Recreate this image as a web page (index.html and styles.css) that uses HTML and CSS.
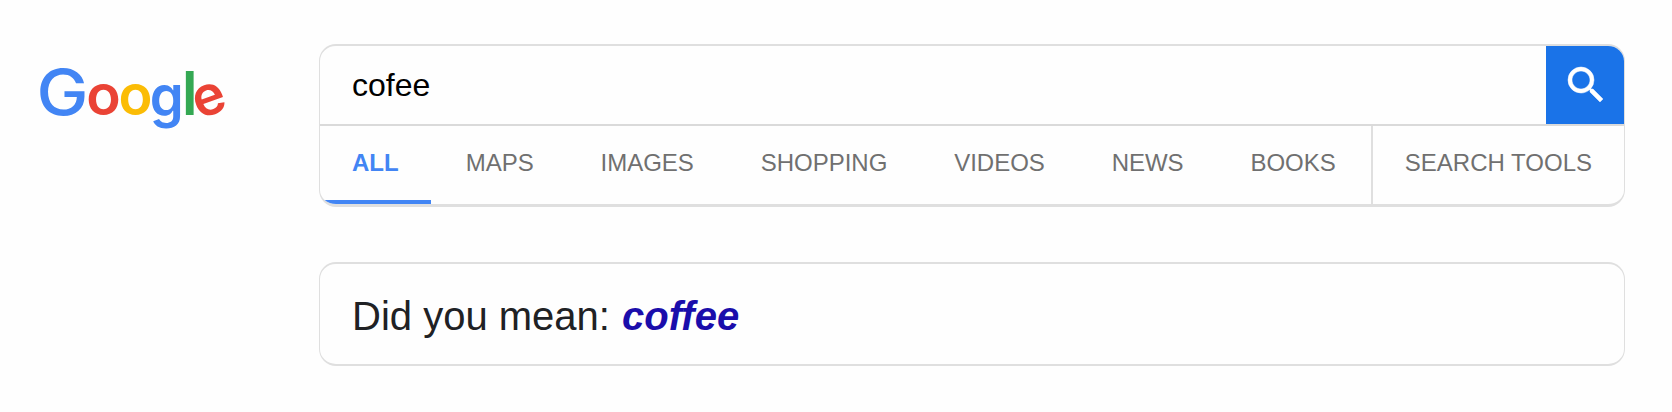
FILE: index.html
```html
<!DOCTYPE html>
<html lang="en">
<head>
<meta charset="utf-8">
<title>cofee - Google Search</title>
<link rel="stylesheet" href="styles.css">
</head>
<body>
<div class="page">
  <a class="logo" aria-label="Google">
    <svg width="200" height="80" viewBox="0 0 200 80">
      <g class="logo-text">
        <text class="blue cap" x="-3.500" y="63.500" textLength="52" lengthAdjust="spacingAndGlyphs">G</text>
        <text class="red round" x="46.300" y="63.500" textLength="34.500" lengthAdjust="spacingAndGlyphs">o</text>
        <text class="yellow round" x="78.500" y="63.500" textLength="34" lengthAdjust="spacingAndGlyphs">o</text>
        <text class="blue tail" x="109.800" y="64.500" textLength="34" lengthAdjust="spacingAndGlyphs">g</text>
        <text class="green ascender" x="141.700" y="63.500">l</text>
        <text class="red" x="152.800" y="63.500" transform="rotate(-20 169.800 48)">e</text>
      </g>
    </svg>
  </a>
  <main class="content">
    <section class="search card">
      <form class="search-row">
        <span class="query">cofee</span>
        <button class="search-button" type="button" aria-label="Search">
          <svg width="48" height="48" viewBox="0 0 24 24" fill="#fff" stroke="#fff" stroke-width=".25"><path d="M15.5 14h-.79l-.28-.27A6.47 6.47 0 0 0 16 9.500 6.500 6.500 0 1 0 9.500 16c1.610 0 3.090-.59 4.230-1.570l.27.28v.79l5 4.990L20.490 19l-4.990-5zm-6 0C7.010 14 5 11.990 5 9.500S7.010 5 9.500 5 14 7.010 14 9.500 11.990 14 9.500 14z"/></svg>
        </button>
      </form>
      <nav class="tabs">
        <a class="tab active">ALL</a>
        <a class="tab">MAPS</a>
        <a class="tab">IMAGES</a>
        <a class="tab">SHOPPING</a>
        <a class="tab">VIDEOS</a>
        <a class="tab">NEWS</a>
        <a class="tab">BOOKS</a>
        <a class="tools">SEARCH TOOLS</a>
      </nav>
    </section>
    <section class="suggestion card">
      <span>Did you mean:&nbsp;</span><a class="correction">coffee</a>
    </section>
  </main>
</div>
</body>
</html>
```
FILE: styles.css
```css
* { box-sizing: border-box; }
body {
  margin: 0;
  background: #fefefe;
  font-family: "Liberation Sans", Arial, sans-serif;
}
.page { display: flex; padding: 44px 47px 0 40px; height: 412px; overflow: hidden; }
.logo { flex: 0 0 279px; padding-top: 7px; }
.logo svg { display: block; overflow: visible; }
.logo-text { font-family: Inter, sans-serif; font-weight: 600; font-size: 55px; }
.cap { font-size: 63px; font-weight: 500; }
.round { font-size: 56px; }
.tail { font-size: 57px; }
.ascender { font-size: 61px; }
.blue { fill: #4285f4; }
.red { fill: #ea4335; }
.yellow { fill: #fbbc05; }
.green { fill: #34a853; }
.content { flex: 1; display: flex; flex-direction: column; gap: 55px; }
.card { border: 2px solid #dfdfdf; border-radius: 17px; }
.search { border-bottom-width: 3px; height: 163px; overflow: hidden; border-left-width: 1px; border-right-width: 1px; }
.search-row { display: flex; height: 78px; margin: 0; }
.query { flex: 1; padding-left: 32px; font-size: 32px; line-height: 79px; color: #000; }
.search-button {
  width: 78px; padding: 0 0 0 2px; border: 0; background: #1a73e8;
  display: flex; align-items: center; justify-content: center;
}
.tabs {
  display: flex; height: 80px; border-top: 2px solid #dadada;
  font-size: 24px; line-height: 74px; color: #70757a;
}
.tab { padding: 0 32px; margin-right: 2.8px; color: #707070; }
.active { margin-right: 3px; font-weight: 700; color: #4285f4; border-bottom: 4px solid #4285f4; }
.tools { margin-left: auto; padding: 0 32px; border-left: 2px solid #dfdfdf; color: #707070; }
.suggestion {
  height: 104px; padding-left: 32px; border-left-width: 1px; border-right-width: 1px;
  display: flex; font-size: 40px; line-height: 105px; color: #202124;
}
.correction { margin-left: 1px; color: #1a0dab; font-weight: 700; font-style: italic; }
```
